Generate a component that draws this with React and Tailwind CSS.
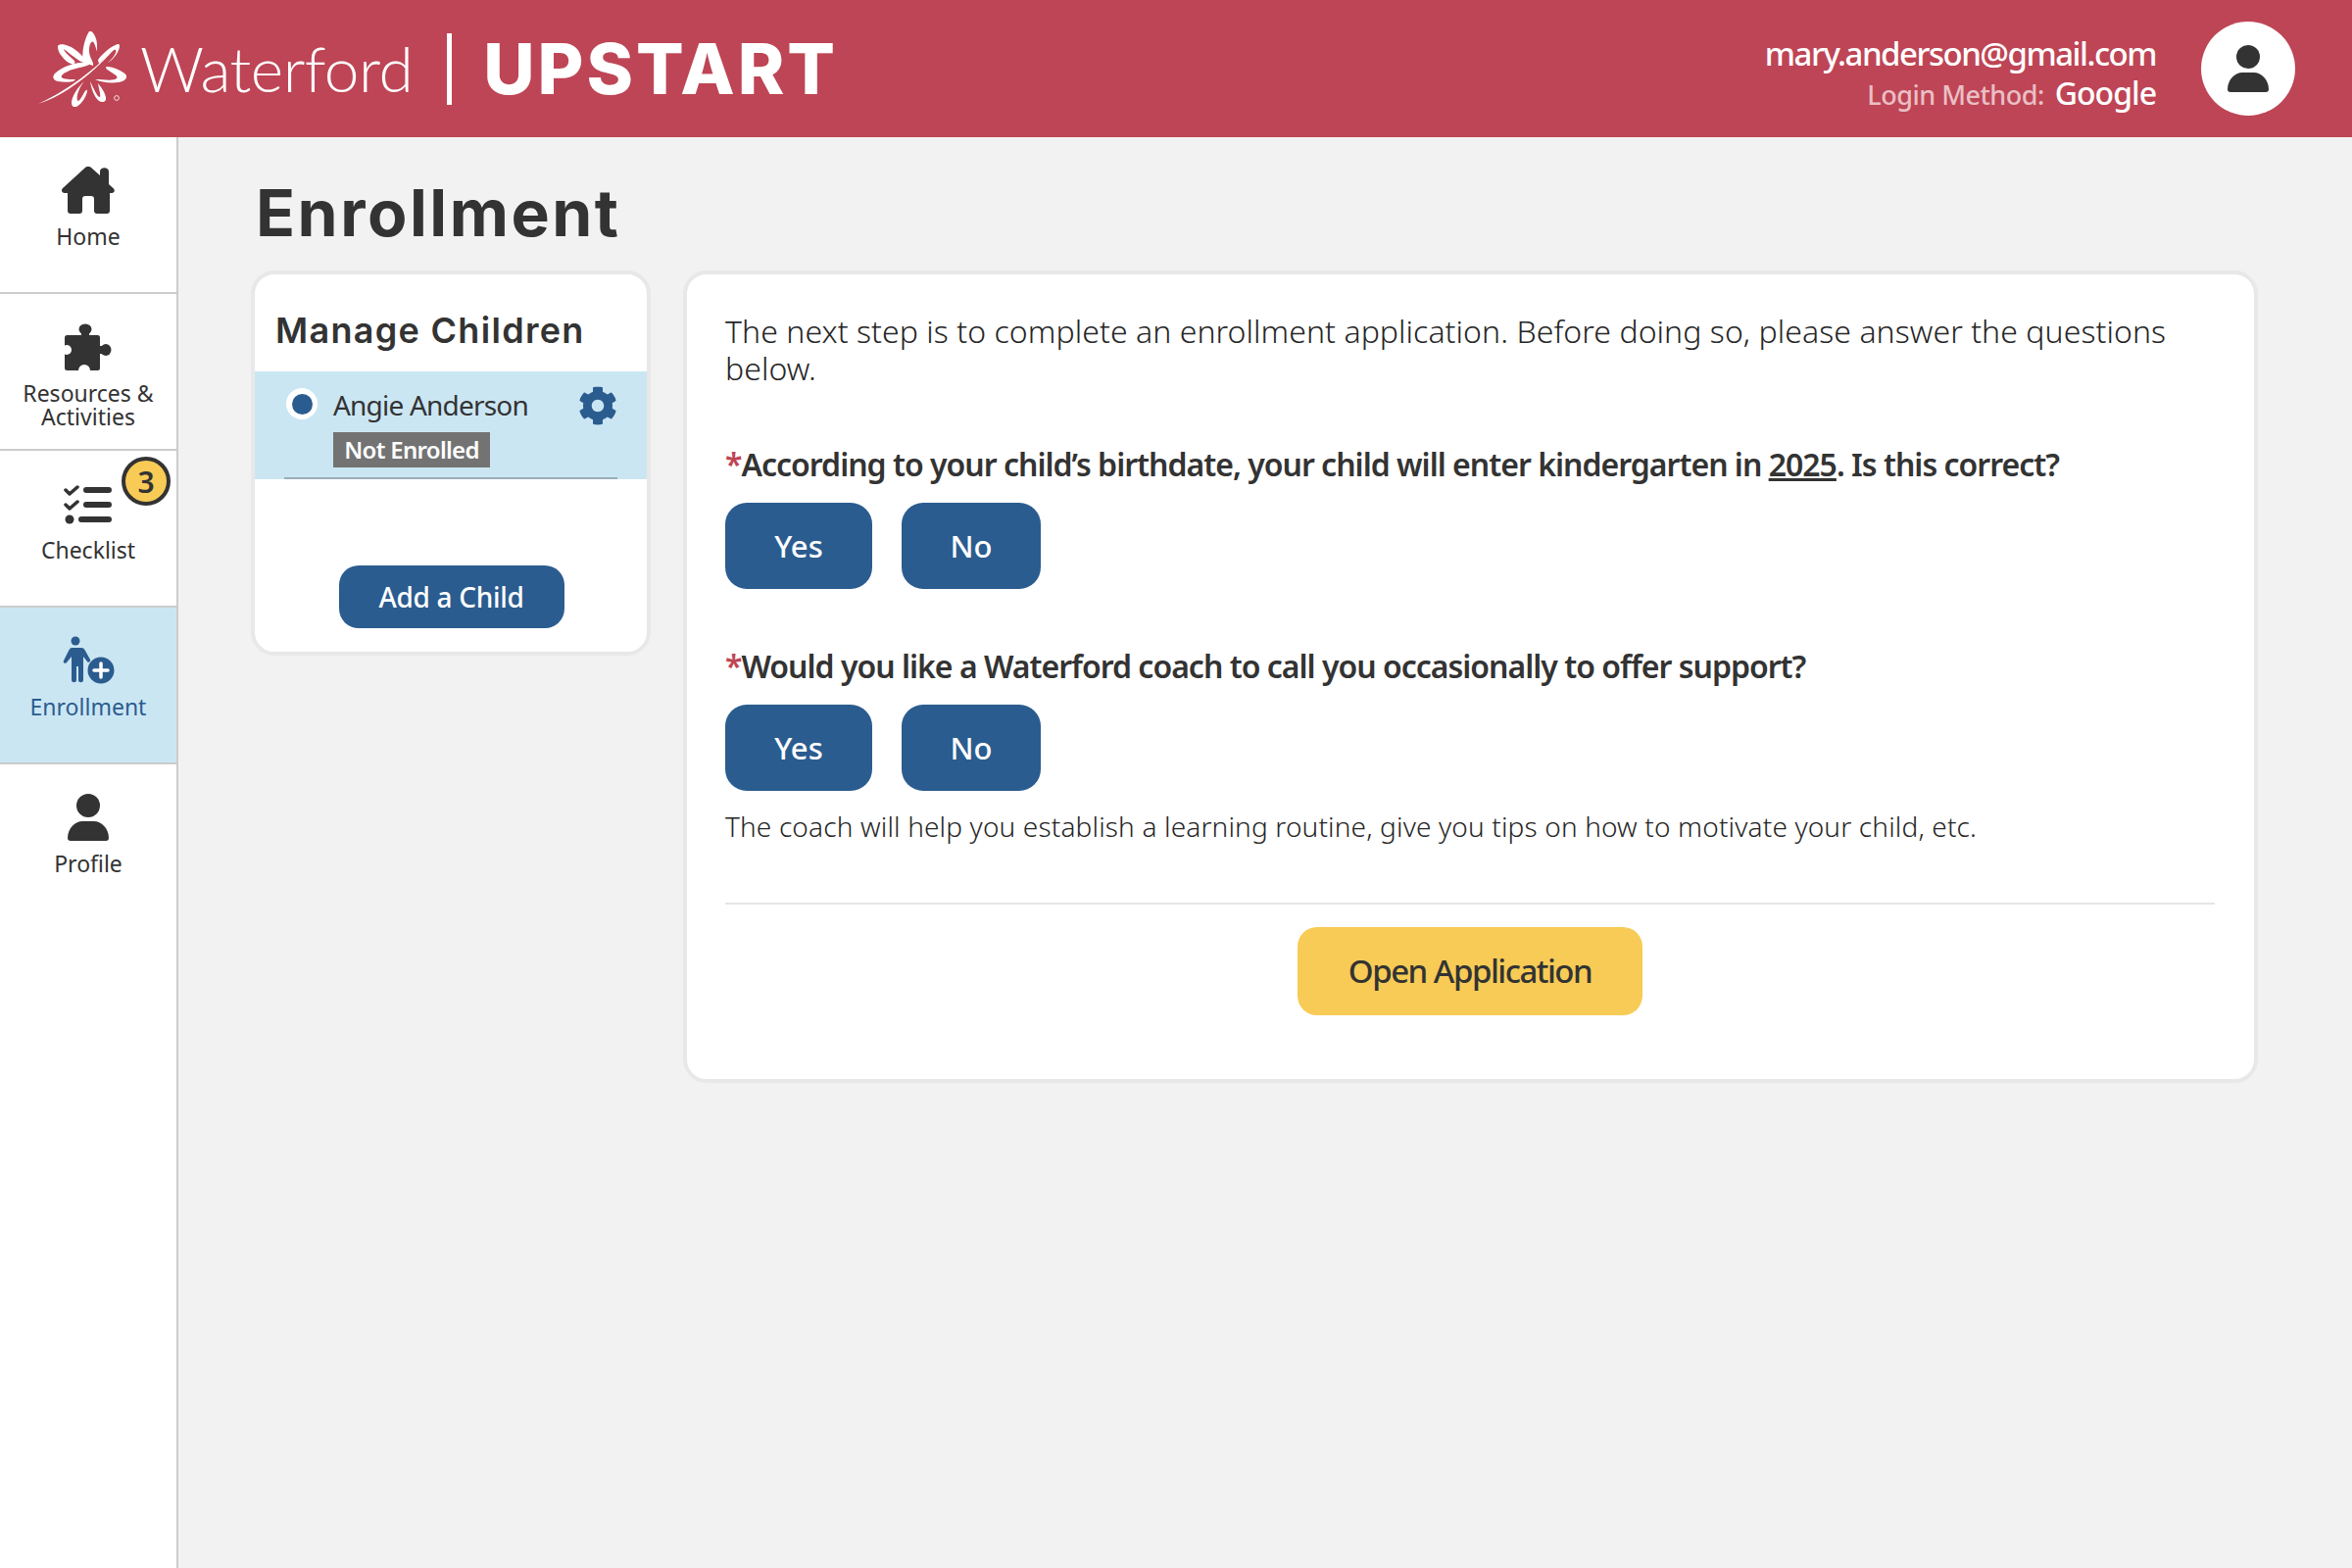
import React from "react";
import { FaCog } from "react-icons/fa";

const body = "font-['Noto_Sans','Open_Sans',sans-serif]";

const LogoMark = () => (
  <svg width="90" height="77" viewBox="0 0 90 77" className="shrink-0">
    <g fill="#fff">
      <path d="M52 0c-5 8-8 22-6 30 2 2 6 4 10 5 1-4-4-8-4-15 0-8 3-12 5-8 3 6 3 14 3 2C60 6 55-2 52 0z" />
      <path d="M21 14c-2 0-1 6 2 10 4 6 9 9 13 10 1-1 2-2 1-4-4-4-10-8-11-12 4 3 10 8 16 12 4 2 8 3 10 2-6-6-14-15-21-17-4-2-9-2-10-1z" />
      <path d="M81 13c-6 2-14 8-20 16l1 4c4-4 7-6 10-9 3-4 6-6 7-5 2 1-2 8-8 13 6-3 12-12 12-17 0-2-1-2-2-2z" />
      <path d="M55 32c-12-2-28 2-38 11-3 3-2 7 3 8 6 1 12 1 16 0l2-2c-5 0-12 0-14-2-2-3 8-8 18-10 5-1 9-2 13-5z" />
      <path d="M70 36c-2 0-1 2 2 4 6 4 10 6 8 8-3 3-14 1-22 1 6 3 16 4 24 3 6-1 9-4 8-7-2-4-14-9-20-9z" />
      <path d="M47 51c-7 6-13 16-13 22 0 3 2 5 5 4 6-3 11-12 11-17-2-2-6 10-9 11-3 0-1-12 6-20z" />
      <path d="M53 51c1 7 4 16 9 20 3 2 6 1 7-1 1-5-4-12-8-17 1 6 3 12 2 14-3 0-6-8-10-16z" />
      <path d="M0 74c22-10 54-30 81-60C58 42 26 66 0 74z" />
      <circle cx="80" cy="68" r="2.4" fill="none" stroke="#fff" strokeWidth="0.8" />
    </g>
  </svg>
);

const HomeIcon = () => (
  <svg width="54" height="48" viewBox="0 0 54 48" fill="currentColor">
    <path d="M24 1c2-1.500 4-1.500 6 0l9 8V5c0-5 9-5 9 0v13l4.500 4c2.500 2.500 1 5-1.500 5h-2v18c0 2-1 3-3 3H36c-2 0-3-1-3-3V33c0-2-1-3-3-3h-6c-2 0-3 1-3 3v12c0 2-1 3-3 3H9c-2 0-3-1-3-3V27H3c-3 0-4-3-2-5z" />
  </svg>
);

const PuzzleIcon = () => (
  <svg width="48" height="48" viewBox="0 0 48 48">
    <ellipse cx="21" cy="6" rx="6.500" ry="5.500" fill="#333" />
    <rect x="17" y="8" width="8" height="8" fill="#333" />
    <ellipse cx="42" cy="27" rx="5.500" ry="6" fill="#333" />
    <rect x="34" y="23" width="6" height="8" fill="#333" />
    <rect x="0" y="12" width="36" height="36" rx="2.500" fill="#333" />
    <circle cx="2" cy="27" r="5" fill="#fff" />
    <circle cx="20" cy="48" r="6" fill="#fff" />
  </svg>
);

const PersonIcon = ({ className }) => (
  <svg width="42" height="48" viewBox="0 0 42 48" fill="currentColor" className={className}>
    <circle cx="21" cy="12" r="12" />
    <path d="M0 45c0-10 8-17 15-17h12c7 0 15 7 15 17 0 2-1 3-3 3H3c-2 0-3-1-3-3z" />
  </svg>
);

const ChecklistIcon = () => (
  <svg width="50" height="42" viewBox="0 0 50 42" fill="none" stroke="#333" strokeLinecap="round" strokeLinejoin="round">
    <path d="M2 7l4 4 8-7M2 22l4 4 8-7" strokeWidth="3.500" />
    <circle cx="6" cy="37" r="4.500" fill="#333" stroke="none" />
    <path d="M23 7h23M23 22h23M18 37h28" strokeWidth="6" />
  </svg>
);

const EnrollIcon = () => (
  <svg width="56" height="50" viewBox="0 0 56 50">
    <circle cx="15" cy="5" r="4.500" fill="#2b5c8f" />
    <path d="M8 12h13c2 0 3 1 4 3l5 9c1 2-2 4-3 2l-4-5v24c0 3-5 3-5 0V31h-2v14c0 3-5 3-5 0V21l-5 6c-2 2-4 0-3-2l5-10c1-2 2-3 3-3z" fill="#2b5c8f" />
    <circle cx="41" cy="35" r="13.500" fill="#2b5c8f" />
    <path d="M41 28v14M34 35h14" stroke="#fff" strokeWidth="3.500" strokeLinecap="round" />
  </svg>
);

const NavItem = ({ icon, label, active, badge }) => (
  <div className={`relative h-[160px] border-b-[2px] border-[#cccccc] flex flex-col items-center pt-[29px] ${active ? "bg-[#cbe6f3] text-[#2b5c8f]" : "text-[#333333]"}`}>
    <div className="h-[50px] flex items-center justify-center">{icon}</div>
    <div className="mt-[10px] text-[23px] leading-[24px] text-center">{label}</div>
    {badge && (
      <div className="absolute top-[6px] right-[6px] w-[50px] h-[50px] rounded-full bg-[#f7cb55] border-[4px] border-[#333333] flex items-center justify-center text-[30px] font-semibold">
        {badge}
      </div>
    )}
  </div>
);

const Question = ({ children }) => (
  <div className="text-[32px] leading-[40px] font-semibold text-[#333333] tracking-[-1px]">
    <span className="text-[#be4555]">*</span>
    {children}
  </div>
);

const YesNo = () => (
  <div className="flex gap-[30px] mt-[19px]">
    <button className="w-[150px] h-[88px] rounded-[22px] bg-[#2b5c8f] text-white text-[31px] font-medium">Yes</button>
    <button className="w-[142px] h-[88px] rounded-[22px] bg-[#2b5c8f] text-white text-[31px] font-medium">No</button>
  </div>
);

export default function App() {
  return (
    <div className={`${body} w-[2400px] h-[1600px] bg-[#f2f2f2] flex flex-col overflow-hidden`}>
      <header className="h-[140px] shrink-0 bg-[#be4555] flex items-center justify-between text-white pl-[39px] pr-[58px]">
        <div className="flex items-center">
          <LogoMark />
          <span className="ml-[14px] font-['Lato',sans-serif] font-light text-[64px] leading-none tracking-[-0.5px]">Waterford</span>
          <div className="w-[5px] h-[73px] bg-white ml-[35px] mr-[32px]" />
          <span className="font-['Inter',sans-serif] font-extrabold text-[72px] leading-none tracking-[3px]">UPSTART</span>
        </div>
        <div className="flex items-center gap-[46px]">
          <div className="text-right pt-[10px]">
            <div className="text-[33px] leading-[42px] font-medium tracking-[-1.500px]">mary.anderson@gmail.com</div>
            <div className="leading-[38px] flex items-baseline justify-end gap-[11px]">
              <span className="text-[27px] font-medium text-[#eabfc5] tracking-[-0.5px]">Login Method:</span>
              <span className="text-[32px] font-medium tracking-[-1px]">Google</span>
            </div>
          </div>
          <div className="w-[96px] h-[96px] rounded-full bg-white flex items-center justify-center">
            <PersonIcon className="text-[#333333]" />
          </div>
        </div>
      </header>

      <div className="flex flex-1 min-h-0">
        <nav className="w-[182px] shrink-0 bg-white border-r-[2px] border-[#cccccc]">
          <NavItem icon={<HomeIcon />} label="Home" />
          <NavItem icon={<PuzzleIcon />} label={<>Resources &<br />Activities</>} />
          <NavItem icon={<ChecklistIcon />} label="Checklist" badge="3" />
          <NavItem icon={<EnrollIcon />} label="Enrollment" active />
          <div className="flex flex-col items-center pt-[29px] text-[#333333]">
            <div className="h-[50px] flex items-center justify-center"><PersonIcon /></div>
            <div className="mt-[10px] text-[23px] leading-[24px]">Profile</div>
          </div>
        </nav>

        <main className="flex-1 pl-[74px] pr-[96px]">
          <h1 className="font-['Inter',sans-serif] font-bold text-[66px] tracking-[2.500px] leading-[76px] text-[#333333] mt-[39px] ml-[5px]">Enrollment</h1>
          <div className="flex items-start gap-[33px] mt-[21px]">
            <section className="w-[408px] h-[393px] shrink-0 bg-white rounded-[24px] border-[4px] border-[#e8e8e8] flex flex-col overflow-hidden">
              <h2 className="font-['Inter',sans-serif] font-semibold text-[36px] tracking-[1.300px] leading-[44px] text-[#333333] pl-[21px] mt-[35px]">Manage Children</h2>
              <div className="relative h-[110px] mt-[20px] bg-[#cbe6f3] px-[30px] shrink-0">
                <div className="flex items-start pt-[17px]">
                  <div className="w-[32px] h-[32px] rounded-full bg-white flex items-center justify-center shrink-0 ml-[2px]">
                    <div className="w-[21px] h-[21px] rounded-full bg-[#2b5c8f]" />
                  </div>
                  <div className="ml-[16px] flex-1">
                    <div className="text-[28px] leading-[34px] text-[#333333] tracking-[-0.8px]">Angie Anderson</div>
                    <div className="mt-[11px] w-[160px] h-[36px] bg-[#737373] text-white text-[24px] font-semibold leading-[36px] text-center tracking-[-0.7px]">Not Enrolled</div>
                  </div>
                  <FaCog size={40} color="#2b5c8f" className="-mt-[2px]" />
                </div>
                <div className="absolute left-[30px] right-[30px] bottom-0 h-[2px] bg-[#9aadb8]" />
              </div>
              <button className="self-center w-[230px] h-[64px] mt-[88px] ml-[1px] rounded-[20px] bg-[#2b5c8f] text-white text-[28px] font-medium tracking-[-0.3px]">Add a Child</button>
            </section>

            <section className="flex-1 h-[829px] bg-white rounded-[24px] border-[4px] border-[#e8e8e8] pl-[39px] pr-[40px] pt-[39px]">
              <p className="text-[32px] leading-[38px] text-[#262626] font-light tracking-[0.06px]">
                The next step is to complete an enrollment application. Before doing so, please answer the questions below.
              </p>
              <div className="mt-[59px]">
                <Question>According to your child’s birthdate, your child will enter kindergarten in <span className="underline">2025</span>. Is this correct?</Question>
                <YesNo />
              </div>
              <div className="mt-[59px]">
                <Question>Would you like a Waterford coach to call you occasionally to offer support?</Question>
                <YesNo />
                <p className="mt-[18px] text-[28px] leading-[36px] text-[#262626] font-light tracking-[0.15px]">
                  The coach will help you establish a learning routine, give you tips on how to motivate your child, etc.
                </p>
              </div>
              <div className="h-[2px] bg-[#e5e5e5] mt-[60px]" />
              <div className="flex justify-center mt-[23px]">
                <button className="w-[352px] h-[90px] rounded-[20px] bg-[#f7cb55] text-[#333333] text-[33px] font-medium tracking-[-1.500px]">Open Application</button>
              </div>
            </section>
          </div>
        </main>
      </div>
    </div>
  );
}
